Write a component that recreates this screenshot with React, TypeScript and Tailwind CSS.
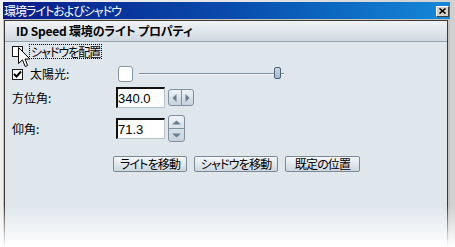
import React from "react";

const jp = "font-['MS_UI_Gothic','Noto_Sans_CJK_JP',sans-serif] [font-feature-settings:'palt']";

function Cursor() {
  return (
    <svg className="absolute left-[18px] top-[47px]" width="13" height="22" viewBox="0 0 13 22">
      <path
        d="M0.5 0.5 L0.5 16.5 L4.5 12.8 L7.2 19.5 L9.6 18.5 L7 12 L12 12 Z"
        fill="#ffffff"
        stroke="#000000"
        strokeWidth="1"
        strokeLinejoin="miter"
      />
    </svg>
  );
}

function CheckBox({ checked }: { checked?: boolean }) {
  return (
    <div className="w-[11px] h-[11px] border border-[#1a1a1a] bg-white flex items-center justify-center">
      {checked && (
        <svg width="9" height="9" viewBox="0 0 9 9">
          <path d="M1 4 L3.5 6.5 L8 1.5" fill="none" stroke="#000" strokeWidth="2" />
        </svg>
      )}
    </div>
  );
}

function Field({ value }: { value: string }) {
  return (
    <div className="w-[49px] h-[21px] bg-white border-t-2 border-l-2 border-t-[#111] border-l-[#111] border-b border-r border-b-[#b8c0c8] border-r-[#b8c0c8] flex items-center text-[13px] leading-none text-black font-['Liberation_Sans',sans-serif]">
      {value}
    </div>
  );
}

function Btn({ label, w }: { label: string; w: string }) {
  return (
    <div
      className={`${w} h-[16px] rounded-[2px] border border-[#7a8896] bg-gradient-to-b from-[#f6f8fa] to-[#cdd7df] flex items-center justify-center text-[12px] tracking-[-0.8px] leading-none text-black ${jp}`}
    >
      {label}
    </div>
  );
}

export default function App() {
  return (
    <div className="relative w-[455px] h-[247px] overflow-hidden bg-gradient-to-r from-[#f0f0f0] via-[#e6e6e6] to-[#d0d0d0] pt-[2px]">
      <div className="ml-[3px] w-[447px] h-[245px] bg-[#c4c4c4] flex flex-col">
        {/* title bar */}
        <div className="h-[17px] flex items-center justify-between bg-gradient-to-r from-[#0a1a88] via-[#0a4aac] to-[#1688d8] pl-[1px] pr-[1px]">
          <span className={`text-white text-[12px] tracking-[-1px] leading-none ${jp}`}>環境ライトおよびシャドウ</span>
          <div className="w-[13px] h-[11px] mt-[1px] bg-[#d4d0c8] border-t border-l border-t-white border-l-white border-b border-r border-b-[#404040] border-r-[#404040] flex items-center justify-center">
            <svg width="7" height="6" viewBox="0 0 7 6">
              <path d="M0.5 0.5 L6.5 5.5 M6.5 0.5 L0.5 5.5" stroke="#000" strokeWidth="1.6" />
            </svg>
          </div>
        </div>
        {/* body */}
        <div className="mt-[1px] ml-[1px] w-[444px] flex-1 border-l border-r border-t border-[#3a3a3a] bg-[#dfe6ec] flex flex-col">
          <div className="h-[21px] bg-gradient-to-b from-[#f0f3f6] to-[#cfd9e1] border-b border-[#98a4ac] flex items-center pl-[11px]">
            <span className={`text-[12px] font-bold tracking-[-0.2px] leading-none text-black ${jp}`}>ID Speed 環境のライト プロパティ</span>
          </div>
          <div className="flex flex-col pl-[7px]">
            {/* row 1 */}
            <div className="mt-[2px] h-[15px] flex items-center">
              <CheckBox />
              <div className={`ml-[6px] h-[15px] px-[1px] border border-dotted border-black flex items-center text-[12px] tracking-[-1px] leading-none text-black ${jp}`}>
                シャドウを配置
              </div>
            </div>
            {/* row 2 */}
            <div className="mt-[7px] h-[16px] flex items-center">
              <CheckBox checked />
              <span className={`ml-[7px] w-[88px] text-[12px] leading-none text-black ${jp}`}>太陽光:</span>
              <div className="w-[15px] h-[16px] rounded-[3px] border border-[#8696a4] bg-white" />
              <div className="ml-[6px] relative w-[145px] h-[16px] flex items-center">
                <div className="w-full h-[2px] bg-[#7a90a2] border-b border-[#f4f7f9]" />
                <div className="absolute left-[135px] top-[1px] w-[7px] h-[12px] rounded-[2px] border border-[#4e6078] bg-gradient-to-b from-[#c8d6e4] to-[#a8bccf]" />
              </div>
            </div>
            {/* row 3 */}
            <div className="mt-[5px] h-[21px] flex items-center">
              <span className={`w-[104px] text-[12px] leading-none text-black ${jp}`}>方位角:</span>
              <Field value="340.0" />
              <div className="ml-[3px] w-[26px] h-[17px] rounded-[3px] border border-[#8090a0] bg-gradient-to-b from-[#eef2f6] to-[#c6d2dc] flex">
                <div className="flex-1 border-r border-[#8090a0] flex items-center justify-center">
                  <svg width="5" height="8" viewBox="0 0 5 8"><path d="M4.5 0 L0.5 4 L4.5 8 Z" fill="#6a7c90" /></svg>
                </div>
                <div className="flex-1 flex items-center justify-center">
                  <svg width="5" height="8" viewBox="0 0 5 8"><path d="M0.5 0 L4.5 4 L0.5 8 Z" fill="#6a7c90" /></svg>
                </div>
              </div>
            </div>
            {/* row 4 */}
            <div className="mt-[7px] h-[27px] flex items-center">
              <span className={`w-[104px] text-[12px] leading-none text-black ${jp}`}>仰角:</span>
              <Field value="71.3" />
              <div className="ml-[3px] w-[17px] h-[27px] rounded-[3px] border border-[#8090a0] bg-gradient-to-b from-[#eef2f6] to-[#c6d2dc] flex flex-col">
                <div className="flex-1 border-b border-[#8090a0] flex items-center justify-center">
                  <svg width="9" height="5" viewBox="0 0 9 5"><path d="M0 4.5 L4.5 0.5 L9 4.5 Z" fill="#6a7c90" /></svg>
                </div>
                <div className="flex-1 flex items-center justify-center">
                  <svg width="9" height="5" viewBox="0 0 9 5"><path d="M0 0.5 L4.5 4.5 L9 0.5 Z" fill="#6a7c90" /></svg>
                </div>
              </div>
            </div>
            {/* buttons */}
            <div className="mt-[14px] pl-[101px] flex gap-[7px]">
              <Btn label="ライトを移動" w="w-[74px]" />
              <Btn label="シャドウを移動" w="w-[84px]" />
              <Btn label="既定の位置" w="w-[75px]" />
            </div>
          </div>
        </div>
      </div>
      <Cursor />
      <div className="absolute left-0 right-0 bottom-0 h-[42px] bg-gradient-to-b from-[rgba(255,255,255,0)] to-[#ffffff] pointer-events-none" />
    </div>
  );
}
